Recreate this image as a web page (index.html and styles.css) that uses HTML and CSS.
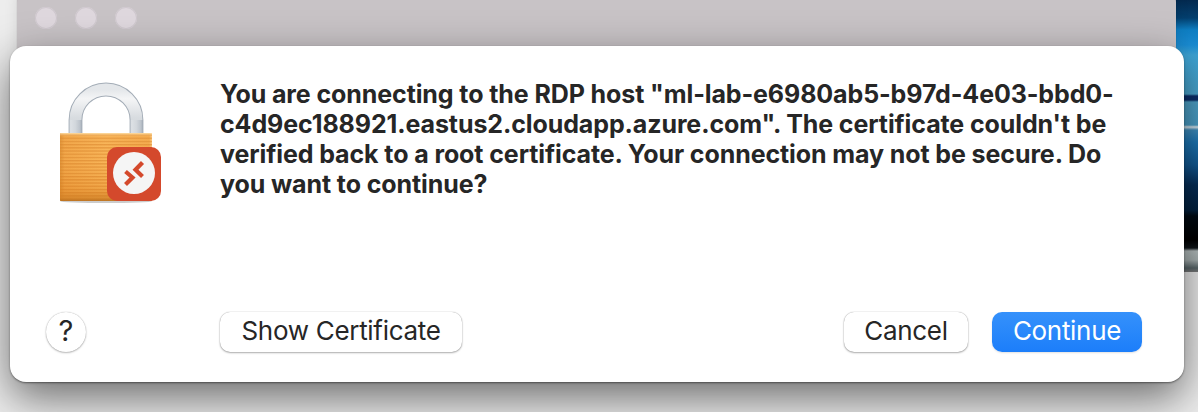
FILE: index.html
```html
<!DOCTYPE html>
<html lang="en">
<head>
<meta charset="utf-8">
<title>RDP certificate warning</title>
<link rel="stylesheet" href="styles.css">
</head>
<body>
<div class="desktop">
  <div class="wallpaper"></div>
  <div class="parent-window">
    <span class="light"></span><span class="light"></span><span class="light"></span>
  </div>
  <section class="dialog">
    <div class="dialog-body">
      <svg class="lock" width="120" height="130" viewBox="46 77 120 130" aria-hidden="true">
        <defs>
          <linearGradient id="shackleLeg" x1="0" y1="0" x2="1" y2="0">
            <stop offset="0" stop-color="#aeb6bf"/>
            <stop offset=".12" stop-color="#dde1e5"/>
            <stop offset=".5" stop-color="#d2d7dc"/>
            <stop offset=".85" stop-color="#bcc3cb"/>
            <stop offset="1" stop-color="#a0a9b4"/>
          </linearGradient>
          <linearGradient id="shackleTop" x1="0" y1="0" x2="0" y2="1">
            <stop offset="0" stop-color="#e4e7ea"/>
            <stop offset=".2" stop-color="#f4f5f6"/>
            <stop offset=".6" stop-color="#d8dce0"/>
            <stop offset="1" stop-color="#d0d5da"/>
          </linearGradient>
          <linearGradient id="body" x1="0" y1="0" x2="1" y2="0">
            <stop offset="0" stop-color="#d98a2e"/>
            <stop offset=".05" stop-color="#f0a243"/>
            <stop offset=".5" stop-color="#f8b254"/>
            <stop offset=".97" stop-color="#f3a748"/>
            <stop offset="1" stop-color="#fbd08f"/>
          </linearGradient>
          <linearGradient id="bodyShade" x1="0" y1="0" x2="0" y2="1">
            <stop offset="0" stop-color="#fde2b0" stop-opacity=".9"/>
            <stop offset=".05" stop-color="#f8bf6c" stop-opacity=".2"/>
            <stop offset=".4" stop-color="#fcc573" stop-opacity=".15"/>
            <stop offset=".8" stop-color="#e08a2c" stop-opacity=".25"/>
            <stop offset=".96" stop-color="#cf7f25" stop-opacity=".75"/>
            <stop offset="1" stop-color="#b56d1e" stop-opacity=".9"/>
          </linearGradient>
          <pattern id="stripes" width="4" height="3.2" patternUnits="userSpaceOnUse">
            <rect width="4" height="1.3" fill="#d47a20" fill-opacity=".6"/>
          </pattern>
        </defs>
        <ellipse cx="106" cy="201.500" rx="46" ry="1.500" fill="#000" fill-opacity=".2"/>
        <path d="M75.500 136V120A30.500 30.500 0 0 1 136.500 120V136" fill="none" stroke="#a4adb7" stroke-width="13.800"/>
        <path d="M75.500 136V120A30.500 30.500 0 0 1 136.500 120V136" fill="none" stroke="url(#shackleTop)" stroke-width="11.800"/>
        <rect x="69" y="120" width="13" height="14" fill="url(#shackleLeg)"/>
        <rect x="130" y="120" width="13" height="14" fill="url(#shackleLeg)"/>
        <rect x="60" y="133" width="92" height="68" rx="1" fill="url(#body)"/>
        <rect x="60" y="133" width="92" height="68" fill="url(#stripes)"/>
        <rect x="60" y="133" width="92" height="68" rx="1" fill="url(#bodyShade)"/>
        <rect x="107" y="147" width="54" height="54" rx="10" fill="#d4492c"/>
        <circle cx="134" cy="173" r="21" fill="#f5f5f5"/>
        <path d="M125.500 171.500L132.500 177.500L125.500 184.500M142.500 162.500L135.500 169.800L142.500 176.500" fill="none" stroke="#d4492c" stroke-width="4.200"/>
      </svg>
      <p class="message">You are connecting to the RDP host "ml-lab-e6980ab5-b97d-4e03-bbd0-c4d9ec188921.eastus2.cloudapp.azure.com". The certificate couldn't be verified back to a root certificate. Your connection may not be secure. Do you want to continue?</p>
    </div>
    <div class="dialog-actions">
      <button class="help" type="button">?</button>
      <button class="btn btn-show" type="button">Show Certificate</button>
      <button class="btn btn-cancel" type="button">Cancel</button>
      <button class="btn btn-primary" type="button">Continue</button>
    </div>
  </section>
</div>
</body>
</html>
```

FILE: styles.css
```css
* { box-sizing: border-box; }
html, body { margin: 0; height: 100%; }
body { overflow: hidden; background: #ededed; font-family: Inter, "Liberation Sans", sans-serif; color: #262626; }

.desktop {
  position: relative;
  width: 1198px;
  height: 412px;
  overflow: hidden;
  background: #ededed;
}
.wallpaper {
  position: absolute;
  top: 0;
  right: 0;
  width: 60px;
  height: 272px;
  background: linear-gradient(180deg,
    #03294f 0, #04406f 18px, #0f7fc4 30px, #1a8dd4 45px, #3ea5d6 55px,
    #4ba6cf 94px, #0c2f6b 96px, #0c2f6b 100px, #4fa4cb 102px, #4a9fc8 125px,
    #e3edf2 127px, #3e8fc0 130px, #1d78b8 142px, #125a95 165px, #062e58 185px,
    #02213f 210px, #010b14 216px, #000 240px, #10161a 248px, #b7c0c0 251px,
    #aab4b4 260px, #59676a 268px, #7c7c7c 272px);
}
.parent-window {
  position: absolute;
  top: -12px;
  left: 17px;
  width: 1159px;
  height: 120px;
  padding: 19px 0 0 18px;
  display: flex;
  gap: 18px;
  align-items: flex-start;
  border-radius: 14px;
  background: #c8c3c6;
  box-shadow: 0 0 1px rgba(0, 0, 0, .35), 0 0 14px rgba(0, 0, 0, .1);
}
.light {
  width: 22px;
  height: 22px;
  border-radius: 50%;
  background: #dfd8de;
  box-shadow: inset 0 0 0 1px #cfc8ce;
}
.dialog {
  position: absolute;
  top: 46px;
  left: 10px;
  width: 1174px;
  height: 336px;
  display: flex;
  flex-direction: column;
  justify-content: space-between;
  padding: 31px 42px 30px 36px;
  background: #fff;
  border-radius: 16px;
  box-shadow: 0 1px 2px rgba(0, 0, 0, .45), 0 16px 44px rgba(0, 0, 0, .55);
}
.dialog-body {
  display: flex;
  gap: 54px;
  margin-right: 24px;
}
.lock {
  flex: none;
  display: block;
}
.message {
  margin: 2px 0 0;
  font-size: 25px;
  font-weight: 700;
  line-height: 30px;
  letter-spacing: -.1px;
  color: #262626;
}
.dialog-actions {
  display: flex;
  align-items: center;
}
button {
  font-family: inherit;
  font-size: 26px;
  letter-spacing: -.3px;
  line-height: 36px;
  color: #262626;
  border: 0;
  background: #fff;
  padding: 0 0 2px;
  height: 40px;
}
.help {
  width: 40px;
  border-radius: 50%;
  font-size: 29px;
  font-weight: 400;
  letter-spacing: 0;
  box-shadow: 0 0 1px rgba(0, 0, 0, .35), 0 1px 2px rgba(0, 0, 0, .25);
}
.btn {
  border-radius: 10px;
  box-shadow: 0 0 1px rgba(0, 0, 0, .4), 0 1px 2px rgba(0, 0, 0, .3);
}
.btn-show { width: 242px; margin-left: 134px; }
.btn-cancel { width: 124px; margin-left: auto; }
.btn-primary {
  width: 150px;
  margin-left: 24px;
  color: #fff;
  background: linear-gradient(180deg, #3591fb, #1c7efa);
  box-shadow: 0 1px 2px rgba(0, 0, 0, .12);
}
```
